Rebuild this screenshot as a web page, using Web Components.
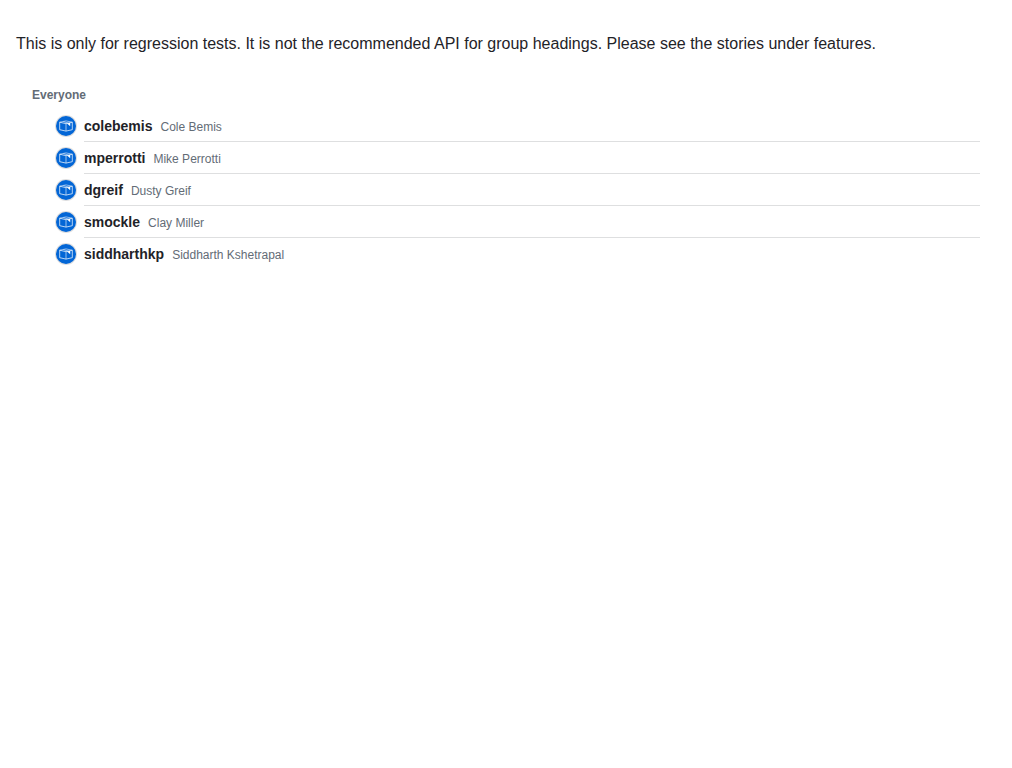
<!DOCTYPE html>
<html lang="en">
<head>
<meta charset="utf-8">
<title>Action list</title>
<style>
body { margin: 0; background: #fff; color: #1f2328; font: 16px/24px "Liberation Sans", Arial, sans-serif; }
</style>
</head>
<body>
<story-page>
  <span slot="note">This is only for regression tests. It is not the recommended API for group headings. Please see the stories under features.</span>
  <list-group heading="Everyone">
    <user-item login="colebemis">Cole Bemis</user-item>
    <user-item login="mperrotti">Mike Perrotti</user-item>
    <user-item login="dgreif">Dusty Greif</user-item>
    <user-item login="smockle">Clay Miller</user-item>
    <user-item login="siddharthkp">Siddharth Kshetrapal</user-item>
  </list-group>
</story-page>
<script>
const define = (name, html, setup) => customElements.define(name, class extends HTMLElement {
  constructor() {
    super();
    this.attachShadow({ mode: 'open' }).innerHTML = html;
  }
  connectedCallback() { if (setup) setup(this, this.shadowRoot); }
});

define('story-page', `
<style>
:host { display: block; padding: 16px; }
p { margin: 16px 0; }
</style>
<p><slot name="note"></slot></p>
<slot></slot>`);

define('list-group', `
<style>
:host { display: block; padding: 8px 0; margin-top: 16px; }
h3 { margin: 0; padding: 6px 16px; font-size: 12px; line-height: 18px; font-weight: 700; color: #636c76; }
.items { display: flex; flex-direction: column; padding: 0 16px 0 40px; }
</style>
<h3></h3>
<div class="items" role="list"><slot></slot></div>`,
(el, root) => { root.querySelector('h3').textContent = el.getAttribute('heading'); });

define('user-avatar', `
<style>
:host { display: block; width: 20px; height: 20px; border-radius: 50%; background: #0366d6; box-shadow: 0 0 0 1px rgba(31,35,40,.15); }
svg { display: block; }
</style>
<svg width="20" height="20" viewBox="0 0 20 20" fill="none" stroke="#fff" stroke-width=".85" stroke-linejoin="round" aria-hidden="true">
  <path stroke-opacity=".85" d="M3.7 6.2v7.5L10 15.1l6.3-1.4V6.2"/>
  <path stroke-opacity=".85" d="M3.7 6.2 10 7.7l6.3-1.5"/>
  <path stroke-opacity=".7" d="M10 7.7v7.4"/>
  <path stroke-opacity=".65" d="M3.7 6.2 10 4.9l6.3 1.3M7.4 5.6l5 1.5"/>
  <path fill="#fff" stroke="none" d="m11 7.6 3.2-.8v3.4l-1.4-1.3z"/>
</svg>`);

define('user-item', `
<style>
:host { display: flex; gap: 8px; height: 32px; }
user-avatar { margin-top: 6px; flex: none; }
.body { flex: 1; display: flex; align-items: baseline; gap: 8px; box-sizing: border-box; padding-top: 6px; border-bottom: 1px solid #dedfe0; }
:host(:last-of-type) .body { border-bottom-color: transparent; }
b { font-size: 14px; line-height: 20px; }
.name { font-size: 12px; line-height: 16px; color: #636c76; }
</style>
<user-avatar></user-avatar>
<div class="body"><b></b><span class="name"><slot></slot></span></div>`,
(el, root) => {
  el.setAttribute('role', 'listitem');
  root.querySelector('b').textContent = el.getAttribute('login');
});
</script>
</body>
</html>
